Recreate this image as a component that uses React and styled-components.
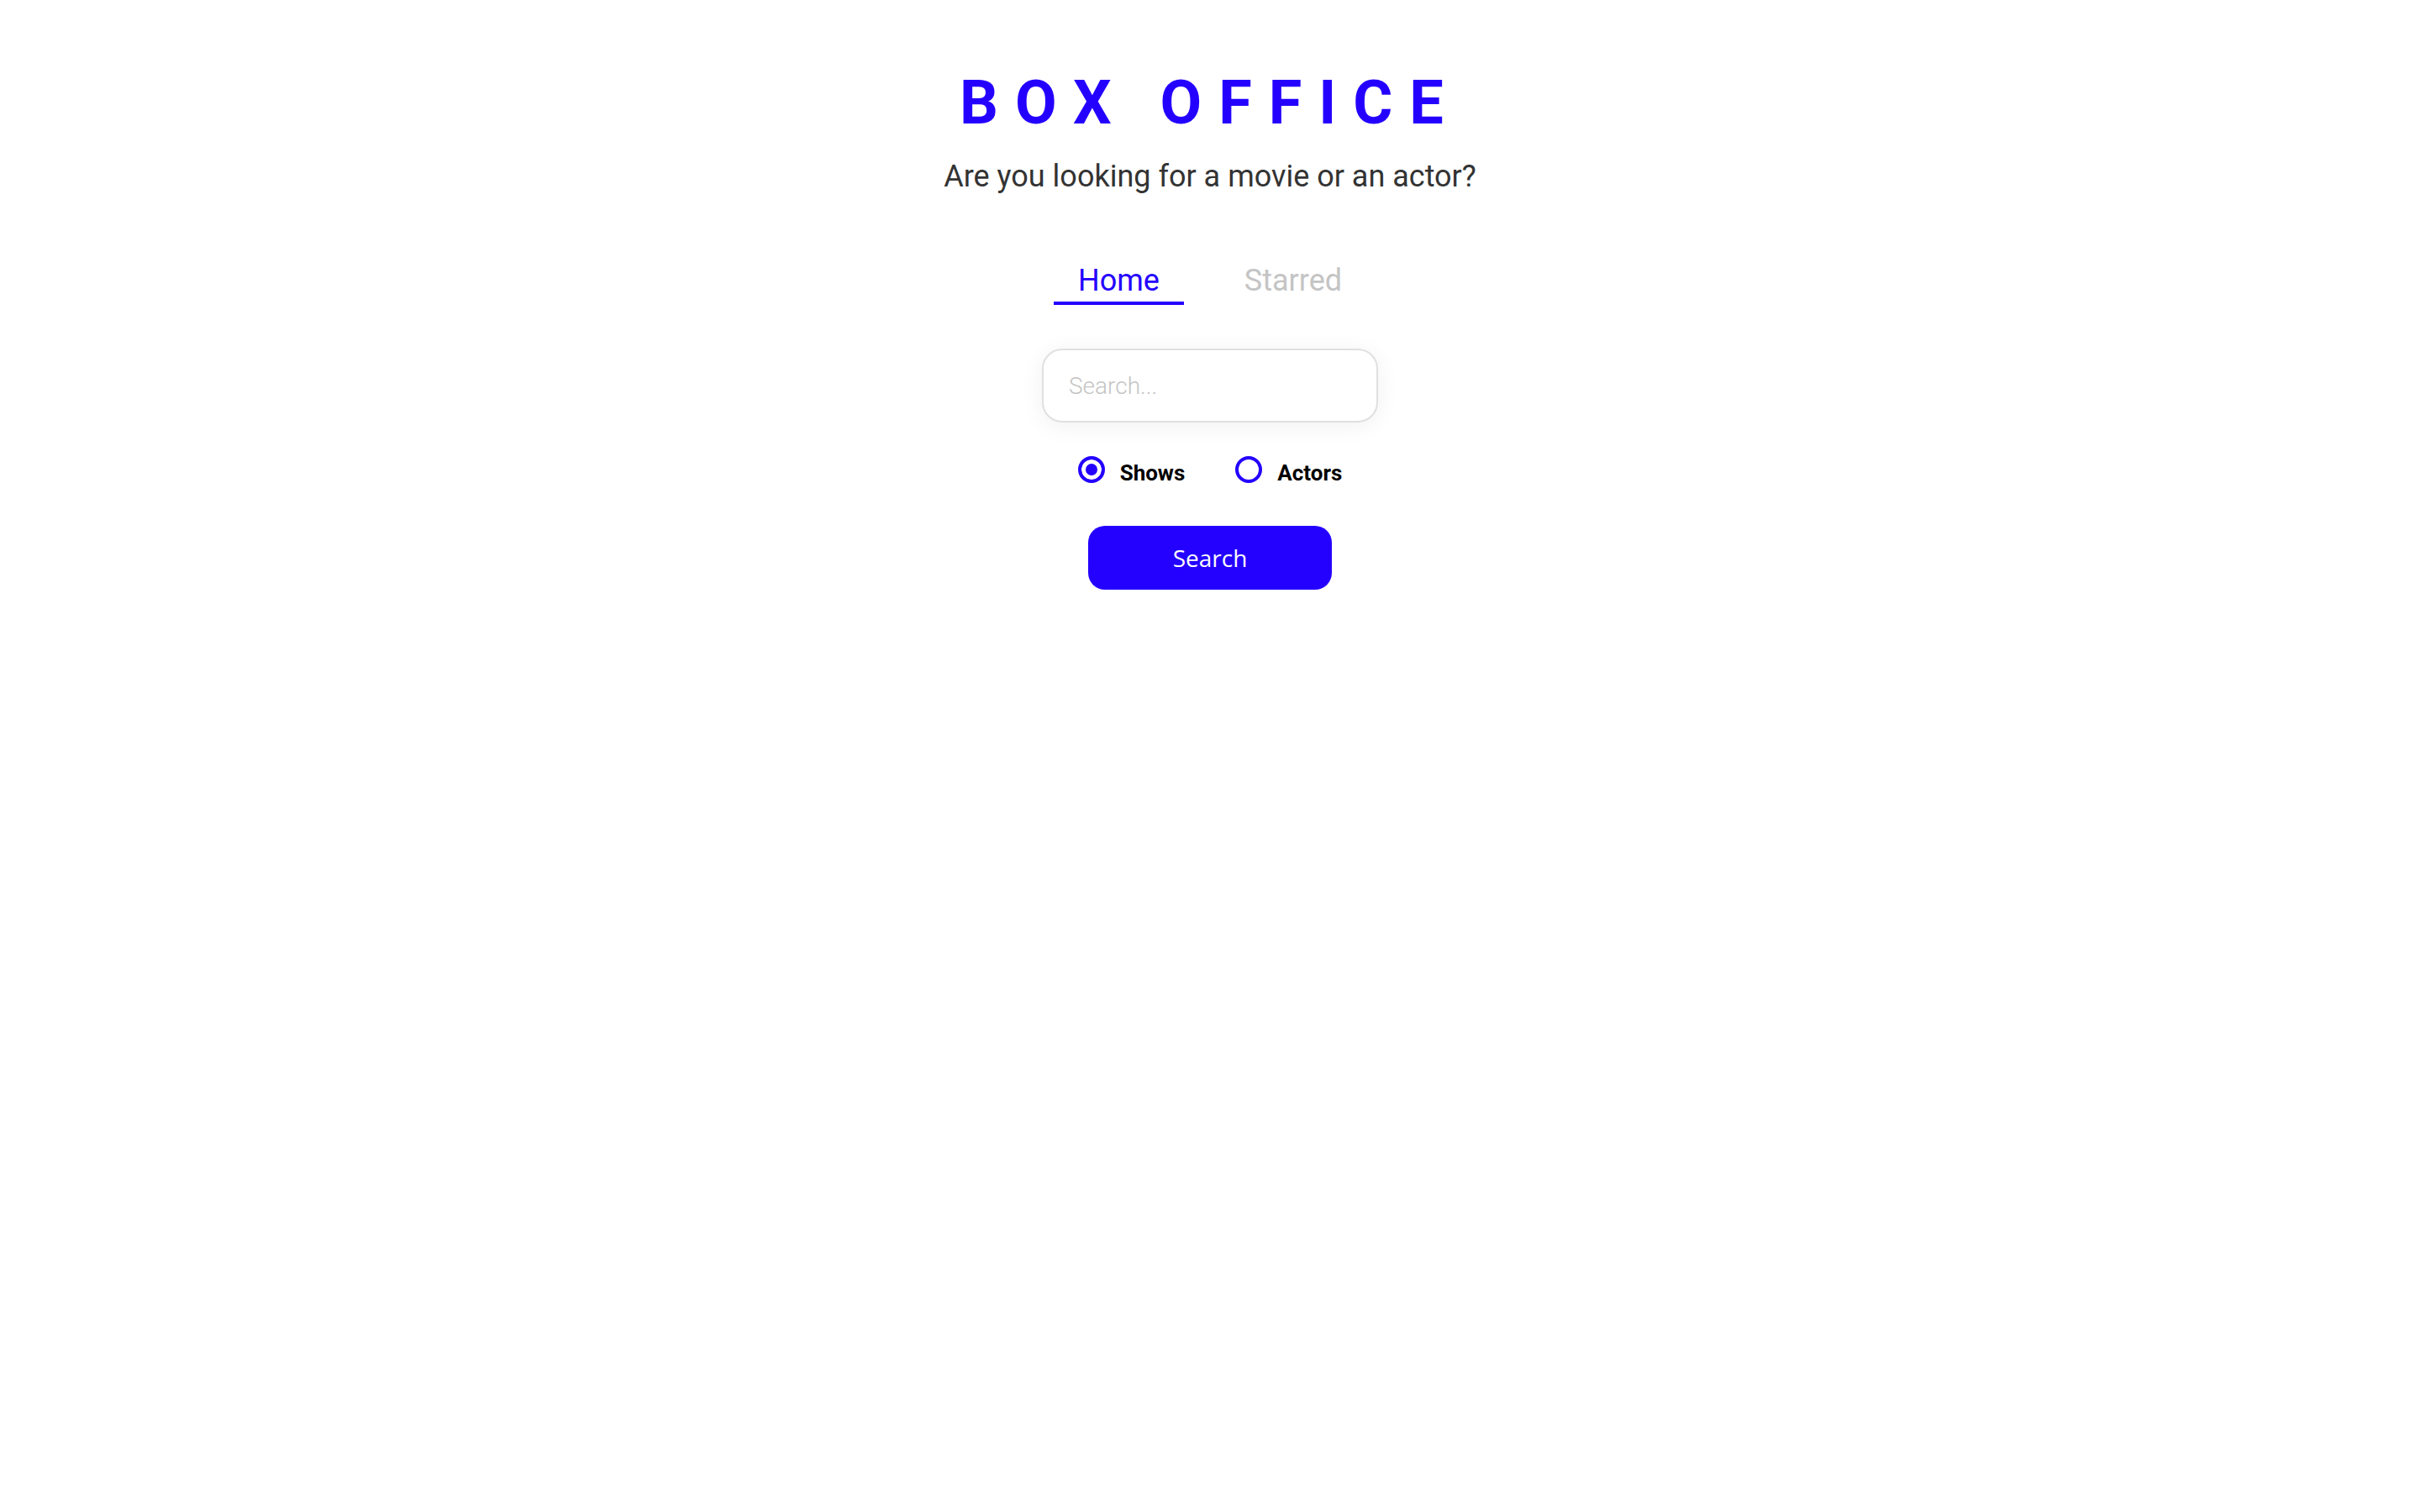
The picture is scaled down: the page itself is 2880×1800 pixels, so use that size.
import React, { useState } from "react";
import styled, { createGlobalStyle } from "styled-components";

const BLUE = "#2400ff";

const GlobalStyle = createGlobalStyle`
  html, body {
    margin: 0;
    padding: 0;
    background: #fff;
  }
  body {
    font-family: Roboto, "Liberation Sans", sans-serif;
    color: #000;
  }
  * {
    box-sizing: border-box;
  }
`;

const Page = styled.div`
  display: flex;
  flex-direction: column;
  align-items: center;
  padding-top: 81px;
`;

const Title = styled.h1`
  margin: 0;
  font-size: 72px;
  font-weight: 700;
  line-height: 84px;
  letter-spacing: 20px;
  text-transform: uppercase;
  color: ${BLUE};
`;

const Subtitle = styled.p`
  margin: 24px 0 0;
  font-size: 36px;
  line-height: 42px;
  color: #333;
`;

const Tabs = styled.nav`
  display: flex;
  gap: 43px;
  margin-top: 82px;
`;

const Tab = styled.a`
  padding: 0 29px 4px;
  font-size: 36px;
  line-height: 42px;
  text-decoration: none;
  cursor: pointer;
  color: ${(p) => (p.$active ? BLUE : "#c4c4c4")};
  border-bottom: 4px solid ${(p) => (p.$active ? BLUE : "transparent")};
`;

const SearchInput = styled.input`
  width: 400px;
  height: 88px;
  margin-top: 52px;
  padding: 0 30px;
  border: 2px solid #e0e0e0;
  border-radius: 24px;
  outline: none;
  box-shadow: 0 4px 28px rgba(0, 0, 0, 0.06);
  font-family: Roboto, sans-serif;
  font-size: 28px;
  font-weight: 300;
  color: #333;

  &::placeholder {
    color: #c4c4c4;
  }
`;

const RadioRow = styled.div`
  display: flex;
  gap: 60px;
  margin-top: 44px;
`;

const RadioLabel = styled.label`
  display: flex;
  align-items: center;
  gap: 18px;
  font-size: 26px;
  font-weight: 700;
  line-height: 32px;
  cursor: pointer;
  user-select: none;
`;

const RadioInput = styled.input.attrs({ type: "radio" })`
  appearance: none;
  margin: 0;
  width: 32px;
  height: 32px;
  border: 4px solid ${BLUE};
  border-radius: 50%;
  background: #fff;
  position: relative;
  top: -4px;
  cursor: pointer;

  &:checked {
    background: ${BLUE};
    box-shadow: inset 0 0 0 5px #fff;
  }
`;

const SearchButton = styled.button`
  width: 290px;
  height: 76px;
  margin-top: 47px;
  border: none;
  border-radius: 20px;
  background: ${BLUE};
  color: #fff;
  font-family: "Open Sans", "Noto Sans", sans-serif;
  font-size: 28px;
  cursor: pointer;
`;

export default function App() {
  const [type, setType] = useState("shows");

  return (
    <>
      <GlobalStyle />
      <Page>
        <Title>Box Office</Title>
        <Subtitle>Are you looking for a movie or an actor?</Subtitle>
        <Tabs>
          <Tab $active>Home</Tab>
          <Tab>Starred</Tab>
        </Tabs>
        <SearchInput type="text" placeholder="Search..." />
        <RadioRow>
          <RadioLabel>
            <RadioInput
              name="search-type"
              checked={type === "shows"}
              onChange={() => setType("shows")}
            />
            Shows
          </RadioLabel>
          <RadioLabel>
            <RadioInput
              name="search-type"
              checked={type === "actors"}
              onChange={() => setType("actors")}
            />
            Actors
          </RadioLabel>
        </RadioRow>
        <SearchButton type="button">Search</SearchButton>
      </Page>
    </>
  );
}
